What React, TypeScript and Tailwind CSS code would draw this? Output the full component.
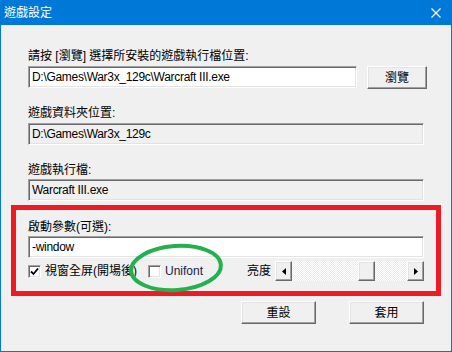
import React from 'react';

const FONT = { fontFamily: '"Liberation Sans", "Noto Sans CJK TC", sans-serif' };

const sunken = "border border-t-[#a0a0a0] border-l-[#a0a0a0] border-b-white border-r-white shadow-[inset_1px_1px_0_#696969,inset_-1px_-1px_0_#e3e3e3]";
const raised = "border border-t-white border-l-white border-b-[#696969] border-r-[#696969] shadow-[inset_-1px_-1px_0_#a0a0a0,inset_1px_1px_0_#e3e3e3] bg-[#f0f0f0]";

function Field({ value, readOnly, className = "" }: { value: string; readOnly?: boolean; className?: string }) {
  return (
    <div className={`h-[22px] flex items-center px-[3px] text-[12px] tracking-[-0.3px] text-black ${sunken} ${readOnly ? "bg-[#f0f0f0]" : "bg-white"} ${className}`}>
      {value}
    </div>
  );
}

function Button({ label, className = "" }: { label: string; className?: string }) {
  return (
    <div className={`h-[23px] flex items-center justify-center text-[12px] text-black ${raised} ${className}`}>
      {label}
    </div>
  );
}

function Checkbox({ checked }: { checked?: boolean }) {
  return (
    <div className={`w-[13px] h-[13px] bg-white flex items-center justify-center ${sunken}`}>
      {checked && (
        <svg width="9" height="9" viewBox="0 0 9 9">
          <path d="M1 4.5 L3.5 7 L8 1.5" stroke="#000" strokeWidth="1.8" fill="none" />
        </svg>
      )}
    </div>
  );
}

function ArrowButton({ dir }: { dir: 'left' | 'right' }) {
  return (
    <div className={`w-[17px] h-[20px] flex items-center justify-center ${raised}`}>
      <svg width="4" height="7" viewBox="0 0 4 7">
        {dir === 'left' ? <path d="M4 0 L0 3.5 L4 7 Z" fill="#000" /> : <path d="M0 0 L4 3.5 L0 7 Z" fill="#000" />}
      </svg>
    </div>
  );
}

export default function App() {
  return (
    <div className="relative w-[452px] h-[352px] border border-[#0078d7] bg-[#f0f0f0] flex flex-col" style={FONT}>
      {/* title bar */}
      <div className="h-[25px] -mx-px -mt-px bg-[#0078d7] flex items-center justify-between pl-[4px] pr-[11px] text-white text-[12px]">
        <span className="mt-[1px]">遊戲設定</span>
        <svg width="10" height="10" viewBox="0 0 10 10">
          <path d="M0.5 0.5 L9.5 9.5 M9.5 0.5 L0.5 9.5" stroke="#fff" strokeWidth="1.2" />
        </svg>
      </div>

      <div className="flex flex-col px-[10px]">
        <div className="flex flex-col px-[17px] pt-[25px] text-[12px] text-black">
          <div className="h-[12px] leading-[12px]">請按 [瀏覽] 選擇所安裝的遊戲執行檔位置:</div>
          <div className="flex mt-[4px] mr-[-3px]">
            <Field value="D:\Games\War3x_129c\Warcraft III.exe" className="w-[329px]" />
            <Button label="瀏覽" className="ml-[10px] w-[60px]" />
          </div>
          <div className="h-[12px] leading-[12px] mt-[18px]">遊戲資料夾位置:</div>
          <Field value="D:\Games\War3x_129c" readOnly className="mt-[4px]" />
          <div className="h-[12px] leading-[12px] mt-[19px]">遊戲執行檔:</div>
          <Field value="Warcraft III.exe" readOnly className="mt-[3px]" />
        </div>

        {/* red highlight box */}
        <div className="mt-[4px] border-[5px] border-[#ed1c24] flex flex-col px-[12px] pt-[11px] pb-[10px] text-[12px] text-black">
          <div className="h-[12px] leading-[12px]">啟動參數(可選):</div>
          <Field value="-window" className="mt-[3px]" />
          <div className="mt-[3px] h-[20px] flex items-center">
            <Checkbox checked />
            <span className="ml-[4px] w-[103px]">視窗全屏(開場後)</span>
            <Checkbox />
            <span className="ml-[4px] text-[#1c1c44] w-[82px]">Unifont</span>
            <span>亮度</span>
            <div className="ml-[4px] flex flex-1">
              <ArrowButton dir="left" />
              <div className="flex-1 h-[20px] flex justify-end pr-[32px] bg-[repeating-conic-gradient(#ffffff_0_25%,#ebebeb_0_50%)] bg-[length:2px_2px]">
                <div className={`w-[17px] h-[20px] ${raised}`} />
              </div>
              <ArrowButton dir="right" />
            </div>
          </div>
        </div>

        <div className="mt-[5px] flex justify-end gap-[33px] px-[17px]">
          <Button label="重設" className="w-[75px]" />
          <Button label="套用" className="w-[75px]" />
        </div>
      </div>

      {/* green annotation ellipse */}
      <svg className="absolute left-[126px] top-[241px]" width="98" height="52" viewBox="0 0 98 52">
        <ellipse cx="49" cy="26" rx="45" ry="22" fill="none" stroke="#22b14c" strokeWidth="4" transform="rotate(-4 49 26)" />
      </svg>
    </div>
  );
}
